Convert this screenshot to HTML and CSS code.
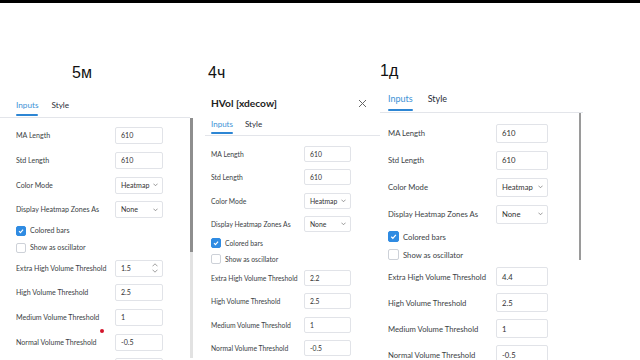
FILE: index.html
```html
<!DOCTYPE html>
<html lang="ru">
<head>
    <meta charset="UTF-8">
    <meta name="viewport" content="width=device-width, initial-scale=1.0">
    <title>HVol — 5м / 4ч / 1д</title>
    <link rel="stylesheet" href="styles.css">
</head>
<body>

    <div class="topbar"></div>

    <div class="shots">

        <!-- 5 минут -->
        <section class="shot s5m">
            <div class="tf">5м</div>
            <div class="dlg">
                <div class="tabs"><span class="tab on">Inputs</span><span class="tab">Style</span></div>
                <div class="pane">
                    <div class="rows">
                        <div class="row"><span class="lbl">MA Length</span><span class="field">610</span></div>
                        <div class="row"><span class="lbl">Std Length</span><span class="field">610</span></div>
                        <div class="row"><span class="lbl">Color Mode</span><span class="field">Heatmap <svg class="chev" viewBox="0 0 6 4"><polyline points="0.5,0.7 3,3.2 5.5,0.7"/></svg></span></div>
                        <div class="row"><span class="lbl">Display Heatmap Zones As</span><span class="field">None <svg class="chev" viewBox="0 0 6 4"><polyline points="0.5,0.7 3,3.2 5.5,0.7"/></svg></span></div>
                        <div class="chk"><span class="box on"><svg viewBox="0 0 10 10"><polyline points="2.5,5.2 4.3,7 7.6,3.2"/></svg></span>Colored bars</div>
                        <div class="chk"><span class="box"></span>Show as oscillator</div>
                        <div class="row lo"><span class="lbl">Extra High Volume Threshold</span><span class="field">1.5 <span class="spin"><svg viewBox="0 0 6 4"><polyline points="0.5,3.3 3,0.8 5.5,3.3"/></svg><svg viewBox="0 0 6 4"><polyline points="0.5,0.7 3,3.2 5.5,0.7"/></svg></span></span></div>
                        <div class="row lo"><span class="lbl">High Volume Threshold</span><span class="field">2.5</span></div>
                        <div class="row lo"><span class="lbl">Medium Volume Threshold</span><span class="field">1</span><span class="dot"></span></div>
                        <div class="row lo"><span class="lbl">Normal Volume Threshold</span><span class="field">-0.5</span></div>
                        <div class="row lo"><span class="lbl"></span><span class="field"></span></div>
                    </div>
                    <div class="sbar"><div class="thumb"></div></div>
                </div>
            </div>
        </section>

        <!-- 4 часа -->
        <section class="shot s4h">
            <div class="tf">4ч</div>
            <div class="dlg">
                <div class="head">
                    <span class="title">HVol [xdecow]</span>
                    <svg class="close" viewBox="0 0 9 9"><path d="M1 1 8 8M8 1 1 8"/></svg>
                </div>
                <div class="tabs"><span class="tab on">Inputs</span><span class="tab">Style</span></div>
                <div class="pane">
                    <div class="rows">
                        <div class="row"><span class="lbl">MA Length</span><span class="field">610</span></div>
                        <div class="row"><span class="lbl">Std Length</span><span class="field">610</span></div>
                        <div class="row"><span class="lbl">Color Mode</span><span class="field">Heatmap <svg class="chev" viewBox="0 0 6 4"><polyline points="0.5,0.7 3,3.2 5.5,0.7"/></svg></span></div>
                        <div class="row"><span class="lbl">Display Heatmap Zones As</span><span class="field">None <svg class="chev" viewBox="0 0 6 4"><polyline points="0.5,0.7 3,3.2 5.5,0.7"/></svg></span></div>
                        <div class="chk"><span class="box on"><svg viewBox="0 0 10 10"><polyline points="2.5,5.2 4.3,7 7.6,3.2"/></svg></span>Colored bars</div>
                        <div class="chk"><span class="box"></span>Show as oscillator</div>
                        <div class="row lo"><span class="lbl">Extra High Volume Threshold</span><span class="field">2.2</span></div>
                        <div class="row lo"><span class="lbl">High Volume Threshold</span><span class="field">2.5</span></div>
                        <div class="row lo"><span class="lbl">Medium Volume Threshold</span><span class="field">1</span></div>
                        <div class="row lo"><span class="lbl">Normal Volume Threshold</span><span class="field">-0.5</span></div>
                    </div>
                </div>
            </div>
        </section>

        <!-- 1 день -->
        <section class="shot s1d">
            <div class="tf">1д</div>
            <div class="dlg">
                <div class="tabs"><span class="tab on">Inputs</span><span class="tab">Style</span></div>
                <div class="pane">
                    <div class="rows">
                        <div class="row"><span class="lbl">MA Length</span><span class="field">610</span></div>
                        <div class="row"><span class="lbl">Std Length</span><span class="field">610</span></div>
                        <div class="row"><span class="lbl">Color Mode</span><span class="field">Heatmap <svg class="chev" viewBox="0 0 6 4"><polyline points="0.5,0.7 3,3.2 5.5,0.7"/></svg></span></div>
                        <div class="row"><span class="lbl">Display Heatmap Zones As</span><span class="field">None <svg class="chev" viewBox="0 0 6 4"><polyline points="0.5,0.7 3,3.2 5.5,0.7"/></svg></span></div>
                        <div class="chk"><span class="box on"><svg viewBox="0 0 10 10"><polyline points="2.5,5.2 4.3,7 7.6,3.2"/></svg></span>Colored bars</div>
                        <div class="chk"><span class="box"></span>Show as oscillator</div>
                        <div class="row lo"><span class="lbl">Extra High Volume Threshold</span><span class="field">4.4</span></div>
                        <div class="row lo"><span class="lbl">High Volume Threshold</span><span class="field">2.5</span></div>
                        <div class="row lo"><span class="lbl">Medium Volume Threshold</span><span class="field">1</span></div>
                        <div class="row lo"><span class="lbl">Normal Volume Threshold</span><span class="field">-0.5</span></div>
                    </div>
                    <div class="vline"></div>
                </div>
            </div>
        </section>

    </div>

</body>
</html>
```

FILE: styles.css
```css
body {
    margin: 0;
    background: #fff;
    font-family: Lato, "Open Sans", sans-serif;
    color: #3c3f46;
    overflow: hidden;
}
.topbar {
    height: 3px;
    background: #000;
}
.shots {
    display: flex;
    height: 357px;
    overflow: hidden;
}
.shot {
    flex: none;
    position: relative;
}
.tf {
    font: 16px/20px "Liberation Sans", Arial, sans-serif;
    color: #111;
}

/* tabs */
.tabs {
    display: flex;
    border-bottom: 1px solid #e3e5ea;
}
.tab {
    position: relative;
    font-size: var(--tabfs);
    color: #2a2e39;
}
.tab.on {
    color: #3d92d6;
}
.tab.on::after {
    content: "";
    position: absolute;
    left: 0;
    right: 0;
    bottom: 1px;
    height: 2px;
    border-radius: 1px;
    background: #2d86d4;
}

.pane {
    display: flex;
}
.rows {
    flex: 1;
    padding-left: var(--pad);
}
.row {
    position: relative;
    display: flex;
    align-items: center;
    height: var(--row);
}
.row.lo {
    height: var(--row2);
}
.lbl {
    flex: none;
    width: var(--lblw);
    font-size: var(--fs);
    white-space: nowrap;
}
.field {
    flex: none;
    box-sizing: border-box;
    width: var(--inw);
    height: var(--inh);
    padding: 0 4px 0 5px;
    border: 1px solid #e1e3e8;
    border-radius: 2px;
    display: flex;
    align-items: center;
    justify-content: space-between;
    font-size: var(--fs);
    color: #333;
}
.chev {
    width: 5px;
    height: 3.5px;
    fill: none;
    stroke: #777;
    stroke-width: 0.9;
}
.spin {
    display: flex;
    flex-direction: column;
    gap: 2px;
}
.spin svg {
    width: 6px;
    height: 4px;
    fill: none;
    stroke: #888;
    stroke-width: 0.8;
}
.chk {
    display: flex;
    align-items: center;
    gap: var(--cgap);
    height: var(--chk);
    font-size: var(--fs);
}
.box {
    box-sizing: border-box;
    width: var(--cb);
    height: var(--cb);
    border: 1px solid #cdd1d8;
    border-radius: 2px;
    display: flex;
}
.box.on {
    background: #2f8be2;
    border-color: #2f8be2;
}
.box svg {
    width: 100%;
    height: 100%;
    fill: none;
    stroke: #fff;
    stroke-width: 1.4;
}
.dot {
    position: absolute;
    left: 84px;
    top: 24px;
    width: 4px;
    height: 4px;
    border-radius: 50%;
    background: #d2142a;
}

/* 5м */
.s5m {
    width: 193px;
    --pad: 16px;
    --fs: 7.1px;
    --tabfs: 8.2px;
    --row: 24.6px;
    --row2: 24.6px;
    --chk: 17px;
    --lblw: 99px;
    --inw: 48px;
    --inh: 17px;
    --cb: 10px;
    --cgap: 4px;
}
.s5m .tf {
    margin: 60px 0 0 72px;
}
.s5m .dlg {
    margin-top: 12px;
}
.s5m .tabs {
    width: 190px;
    box-sizing: border-box;
    padding-left: 16px;
    gap: 13px;
    height: 23px;
    line-height: 20px;
}
.s5m .rows {
    padding-top: 5.7px;
}
.sbar {
    width: 3px;
    height: 240px;
    background: #e2e2e2;
}
.thumb {
    height: 134px;
    background: #8e8e8e;
}

/* 4ч */
.s4h {
    width: 187px;
    --pad: 18px;
    --fs: 6.8px;
    --tabfs: 8px;
    --row: 23.3px;
    --row2: 23.3px;
    --chk: 15.5px;
    --lblw: 93px;
    --inw: 47px;
    --inh: 16px;
    --cb: 10px;
    --cgap: 4px;
}
.s4h .tf {
    margin: 60px 0 0 15px;
}
.s4h .dlg {
    margin-top: 12px;
}
.head {
    display: flex;
    align-items: center;
    justify-content: space-between;
    height: 16px;
    padding: 0 13px 0 18px;
}
.title {
    font-size: 10.2px;
    font-weight: 700;
    color: #222;
}
.close {
    width: 9px;
    height: 9px;
    stroke: #666;
    stroke-width: 1;
}
.s4h .tabs {
    margin: 3px 0 0 12px;
    padding-left: 6px;
    gap: 12px;
    height: 21px;
    line-height: 20px;
}
.s4h .rows {
    padding-top: 6.3px;
}

/* 1д */
.s1d {
    width: 260px;
    --pad: 8px;
    --fs: 7.7px;
    --tabfs: 9px;
    --row: 27px;
    --row2: 26px;
    --chk: 18px;
    --lblw: 108px;
    --inw: 52px;
    --inh: 19px;
    --cb: 11px;
    --cgap: 4px;
}
.s1d .tf {
    margin: 58px 0 0 0;
}
.s1d .dlg {
    width: 203px;
    margin-top: 7px;
}
.s1d .tabs {
    padding-left: 8px;
    gap: 15px;
    height: 24px;
    line-height: 22px;
}
.s1d .rows {
    padding-top: 6.5px;
}
.vline {
    width: 2px;
    height: 147px;
    margin-right: 2px;
    background: #9a9a9a;
}
```
